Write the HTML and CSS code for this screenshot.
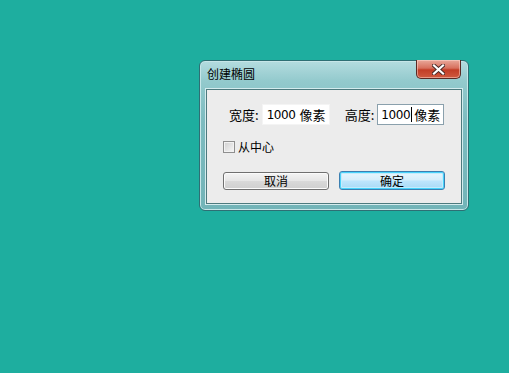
FILE: index.html
```html
<!DOCTYPE html>
<html lang="zh-CN">
<head>
    <meta charset="UTF-8">
    <title>创建椭圆</title>
    <link rel="stylesheet" href="styles.css">
</head>
<body>
    <div class="window">
        <div class="titlebar">
            <span class="title">创建椭圆</span>
            <button class="close">
                <svg width="13" height="11" viewBox="0 0 13 11">
                    <path d="M2 1.5 L11 9.5 M11 1.5 L2 9.5" stroke="#4a2a26" stroke-width="4" stroke-linecap="square"/>
                    <path d="M2 1.5 L11 9.5 M11 1.5 L2 9.5" stroke="#ffffff" stroke-width="2.2" stroke-linecap="square"/>
                </svg>
            </button>
        </div>
        <div class="client">
            <div class="row size-row">
                <label class="field">宽度:<span class="input"><span class="num">1000</span><span class="unit">像素</span></span></label>
                <label class="field">高度:<span class="input focused"><span class="num">1000</span><span class="caret"></span><span class="unit">像素</span></span></label>
            </div>
            <div class="row check-row">
                <span class="checkbox"></span>
                <span>从中心</span>
            </div>
            <div class="row btn-row">
                <button class="btn">取消</button>
                <button class="btn primary">确定</button>
            </div>
        </div>
    </div>
</body>
</html>
```

FILE: styles.css
```css
body {
    margin: 0;
    background: #1eae9f;
    font-family: "Noto Sans CJK SC", "DejaVu Sans", sans-serif;
    font-size: 12px;
    color: #000;
}
.window {
    margin: 60px 0 0 199px;
    width: 270px;
    height: 151px;
    box-sizing: border-box;
    border: 1px solid #2e6f74;
    border-radius: 6px;
    background: linear-gradient(to bottom, #b4dcdf 0px, #93cacd 20px, #7dbcc0 60px, #72b4b8 100%);
    box-shadow: inset 0 0 0 1px #c7e6e8;
    padding: 0 6px 6px 6px;
    display: flex;
    flex-direction: column;
}
.titlebar {
    height: 28px;
    display: flex;
    align-items: flex-start;
    justify-content: space-between;
}
.title {
    margin-top: 5px;
    padding-left: 1px;
    line-height: 16px;
    color: #000;
}
.close {
    width: 45px;
    height: 19px;
    margin-top: -1px;
    margin-right: 1px;
    padding: 0;
    border: 1px solid #5a2a24;
    border-top: none;
    border-radius: 0 0 5px 5px;
    background: linear-gradient(to bottom, #e9a99b 0%, #d7705d 45%, #c23d26 55%, #cf5a3f 100%);
    box-shadow: inset 0 0 0 1px rgba(255, 220, 210, 0.5);
    display: flex;
    align-items: center;
    justify-content: center;
}
.client {
    flex: 1;
    background: #ececec;
    border: 1px solid #4d7a7e;
    box-shadow: 0 0 0 1px #d4ecee;
    padding: 14px 0 0 0;
}
.row {
    display: flex;
    align-items: center;
}
.size-row {
    padding-left: 22px;
    gap: 15px;
    font-size: 13px;
}
.field {
    display: flex;
    align-items: center;
    gap: 3px;
}
.input {
    display: flex;
    align-items: center;
    width: 68px;
    height: 21px;
    box-sizing: border-box;
    padding-left: 4px;
    background: #fff;
    border: 1px solid #f4f4f4;
}
.input.focused {
    border: 1px solid #8aa0ac;
    width: 67px;
    padding-left: 3px;
}
.num {
    font-family: "DejaVu Sans", sans-serif;
    font-size: 12px;
    letter-spacing: -0.4px;
}
.unit {
    margin-left: 4px;
}
.caret {
    width: 1px;
    height: 15px;
    background: #000;
    margin-left: 1px;
}
.caret + .unit {
    margin-left: 2px;
}
.check-row {
    margin-top: 13px;
    padding-left: 16px;
    gap: 3px;
}
.checkbox {
    width: 12px;
    height: 12px;
    box-sizing: border-box;
    border: 1px solid #8f8f8f;
    background: linear-gradient(135deg, #cfcfcf, #f7f7f7);
    box-shadow: inset 0 0 0 1px #f2f2f2;
}
.btn-row {
    margin-top: 17px;
    padding-left: 16px;
    gap: 10px;
}
.btn {
    width: 106px;
    height: 18px;
    padding: 0;
    font-family: "Noto Sans CJK SC", sans-serif;
    font-size: 12px;
    line-height: 14px;
    color: #000;
    border: 1px solid #707070;
    border-radius: 3px;
    background: linear-gradient(to bottom, #f4f4f4 0%, #e6e6e6 48%, #d9d9d9 52%, #cfcfcf 100%);
    box-shadow: inset 0 0 0 1px #fbfbfb;
}
.btn.primary {
    height: 19px;
    margin-top: -1px;
    border: 1px solid #3c7fb1;
    background: linear-gradient(to bottom, #e9f6fd 0%, #d4eefb 48%, #bee6fd 52%, #a7d9f5 100%);
    box-shadow: inset 0 0 0 1px #48d3fb, inset 0 0 0 2px #c4ecfc;
}
```
